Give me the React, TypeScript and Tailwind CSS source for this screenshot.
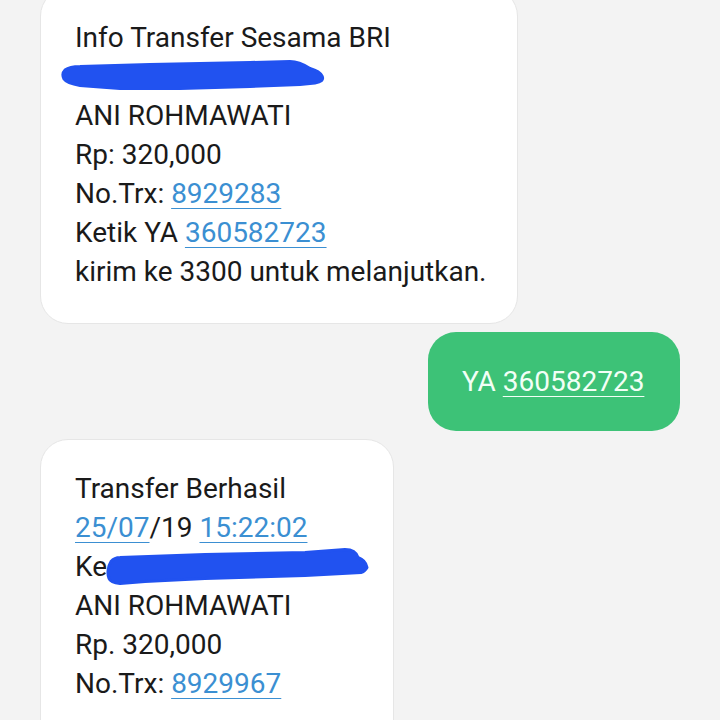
const link = 'text-[#3b8fd2] underline decoration-1 underline-offset-[5px]';

function Scribble({ d, className }: { d: string; className: string }) {
  return (
    <svg className={`absolute top-0 h-[39px] overflow-visible ${className}`} viewBox="0 0 262 39">
      <path d={d} fill="#2152f0" stroke="#2152f0" strokeWidth="3" strokeLinejoin="round" />
    </svg>
  );
}

export default function App() {
  return (
    <div
      className="w-[720px] h-[720px] overflow-hidden bg-[#f3f3f3] text-[#1a1a1a] text-[28px] leading-[39px] whitespace-nowrap px-10 flex flex-col gap-2"
      style={{ fontFamily: 'Roboto, "Noto Sans", sans-serif' }}
    >
      <div className="shrink-0 self-start w-[478px] -mt-3 bg-white rounded-[28px] border border-[#e6e6e6] pl-[34px] pr-[20px] pt-[29px] pb-[32px]">
        <div>Info Transfer Sesama BRI</div>
        <div className="relative h-[39px]">
          <Scribble
            className="-left-[12px] w-[262px]"
            d="M2 13 C6 10 12 9.5 17 9.5 L87 7.5 L187 5.5 L227 4.5 C233 4.5 240 7 247 11.5 C252 13 257 15 259 19 C261 23 258 25 252 26 L237 27.5 L187 29.5 L117 31.5 L57 31.5 L17 28.5 C8 27 3 25 1 22 C-1 18 0 15 2 13 Z"
          />
        </div>
        <div>ANI ROHMAWATI</div>
        <div>Rp: 320,000</div>
        <div>
          No.Trx: <span className={link}>8929283</span>
        </div>
        <div>
          Ketik YA <span className={link}>360582723</span>
        </div>
        <div>kirim ke 3300 untuk melanjutkan.</div>
      </div>

      <div className="shrink-0 self-end w-[252px] h-[99px] rounded-[28px] bg-[#3dc277] text-[#f2fff6] flex items-center pl-[34px]">
        <span>
          YA <span className="underline decoration-1 underline-offset-[5px]">360582723</span>
        </span>
      </div>

      <div className="shrink-0 self-start w-[354px] bg-white rounded-[28px] border border-[#e6e6e6] pl-[34px] pr-[20px] pt-[29px] pb-[32px]">
        <div>Transfer Berhasil</div>
        <div>
          <span className={link}>25/07</span>/19 <span className={link}>15:22:02</span>
        </div>
        <div className="relative h-[39px]">
          Ke
          <Scribble
            className="left-[33px] w-[262px]"
            d="M3 14.5 C6 11 9 10.5 12 10.5 L97 7.5 L197 5.5 L237 2.5 C243 2.5 248 4 250 10.5 C254 12 258 15 259 20.5 C257 24 255 25 253 25.5 L197 28.5 L97 31.5 L37 34.5 L12 36.5 C6 36 2 34 1 31.5 C-1 27 0 19 3 14.5 Z"
          />
        </div>
        <div>ANI ROHMAWATI</div>
        <div>Rp. 320,000</div>
        <div>
          No.Trx: <span className={link}>8929967</span>
        </div>
        <div>&nbsp;</div>
      </div>
    </div>
  );
}
